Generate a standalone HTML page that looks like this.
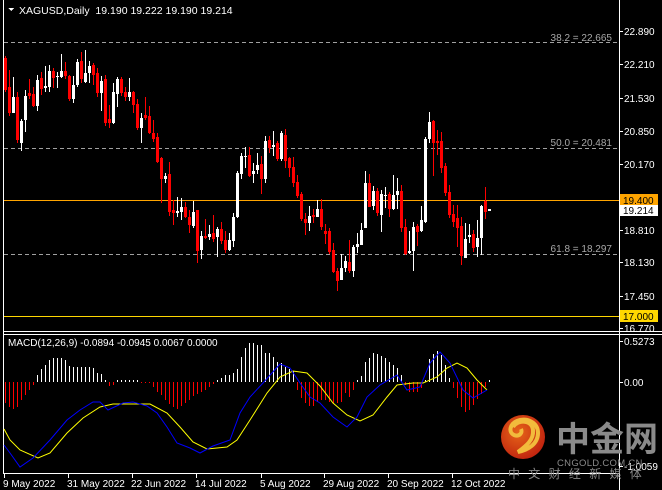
<!DOCTYPE html>
<html><head><meta charset="utf-8">
<style>
html,body{margin:0;padding:0;background:#000;width:662px;height:490px;overflow:hidden}
svg{display:block}
text{font-family:"Liberation Sans","Noto Sans CJK SC",sans-serif;font-size:10px;fill:#fff}
</style></head><body>
<svg id="s" width="662" height="490" xmlns="http://www.w3.org/2000/svg" shape-rendering="crispEdges">
<rect width="662" height="490" fill="#000"/>
<!-- frame -->
<rect x="3" y="0" width="1" height="474" fill="#fff"/>
<rect x="619" y="0" width="1" height="490" fill="#fff"/>
<rect x="3" y="331" width="659" height="1" fill="#fff"/>
<rect x="3" y="334" width="659" height="1" fill="#fff"/>
<rect x="3" y="473" width="616" height="1" fill="#fff"/>
<!-- fib dashed lines -->
<g stroke="#a0a0a0" stroke-width="1" stroke-dasharray="4,3">
<line x1="4" y1="42.5" x2="619" y2="42.5"/>
<line x1="4" y1="148.5" x2="619" y2="148.5"/>
<line x1="4" y1="254.5" x2="619" y2="254.5"/>
</g>
<g style="font-size:10px">
<text x="612" y="41" text-anchor="end" style="fill:#a8a8a8">38.2 = 22.665</text>
<text x="612" y="146" text-anchor="end" style="fill:#a8a8a8">50.0 = 20.481</text>
<text x="612" y="252" text-anchor="end" style="fill:#a8a8a8">61.8 = 18.297</text>
</g>
<rect x="4" y="200" width="615" height="1" fill="#ffa500"/>
<rect x="4" y="316" width="615" height="1" fill="#ffd700"/>
<g id="c"></g>
<g id="h"></g>
<polyline id="yl" fill="none" stroke="#ffff00" stroke-width="1" shape-rendering="auto"/>
<polyline id="bl" fill="none" stroke="#0000ff" stroke-width="1" shape-rendering="auto"/>
<!-- zero line dotted hint not needed -->
<!-- header -->
<path d="M8 8 L14 8 L11 11 Z" fill="#fff"/>
<text x="19" y="14" style="font-size:10.5px">XAGUSD,Daily&#160; 19.190 19.222 19.190 19.214</text>
<text x="8" y="346" style="font-size:10px">MACD(12,26,9) -0.0894 -0.0945 0.0067 0.0000</text>
<!-- right axis -->
<g id="ax"></g>
<rect x="620" y="194" width="38" height="12" fill="#ffa500"/>
<text x="623" y="204" style="fill:#000">19.400</text>
<rect x="620" y="205" width="38" height="11" fill="#fff"/>
<text x="623" y="214" style="fill:#000">19.214</text>
<rect x="620" y="310" width="38" height="12" fill="#ffd700"/>
<text x="623" y="320" style="fill:#000">17.000</text>
<!-- dates -->
<g id="dt"></g>
<!-- watermark -->
<defs><radialGradient id="g1" cx="0.4" cy="0.4" r="0.7"><stop offset="0" stop-color="#f26a1b"/><stop offset="1" stop-color="#c8200f"/></radialGradient></defs>
<g shape-rendering="auto" opacity="0.95">
<circle cx="523" cy="437" r="22" fill="url(#g1)"/>
<path d="M513 427 C518 419 532 420 533 430 C534 440 526 446 518 452 C528 450 538 444 538 433 C538 422 526 417 517 421 C510 424 508 432 514 435 C519 437 523 433 521 429" fill="none" stroke="#ffc640" stroke-width="4"/>
</g>
<text x="556" y="451" style="font-size:34px;font-weight:bold;fill:#8a8a8a;font-family:'Noto Sans CJK SC','WenQuanYi Zen Hei',sans-serif">中金网</text>
<text x="557" y="466" style="font-size:9.5px;fill:#8a8a8a;letter-spacing:0.3px">CNGOLD.COM.CN</text>
<text x="508" y="478" style="font-size:12px;fill:#8a8a8a;letter-spacing:8.3px;font-family:'Noto Sans CJK SC','WenQuanYi Zen Hei',sans-serif">中文财经新媒体</text>
</svg>
<script>
var NS="http://www.w3.org/2000/svg";
function el(p,t,a){var e=document.createElementNS(NS,t);for(var k in a)e.setAttribute(k,a[k]);p.appendChild(e);return e;}
// [color(1=white,0=red), bodyTop, bodyBot, wickTop, wickBot]
var C=[[0,58,90,56,92],[0,87,113,70,116],[1,97,113,77,113],[0,97,140,92,143],[1,121,143,119,151],[1,96,120,90,132],[0,93,96,79,99],[0,94,106,87,107],[1,80,106,75,111],[0,78,89,72,95],
[1,86,88,66,92],[1,71,87,65,92],[0,71,78,68,88],[1,76,77,72,88],[1,71,77,54,78],[0,71,76,62,79],[0,76,99,75,101],[1,85,99,76,103],[1,62,85,59,87],[0,61,79,52,83],
[1,73,82,50,83],[1,66,73,61,83],[0,65,75,63,85],[0,73,93,68,97],[1,81,93,76,111],[0,79,123,75,126],[0,119,123,105,128],[1,92,123,83,124],[1,79,94,77,107],[0,79,93,77,96],
[0,92,97,87,101],[1,92,97,78,101],[0,92,105,91,113],[0,104,128,99,130],[1,118,128,113,143],[0,115,118,97,120],[0,116,133,106,134],[0,133,139,120,142],[0,137,162,133,163],[0,158,179,157,203],
[1,176,179,173,183],[0,174,212,162,216],[0,210,213,200,225],[1,211,213,197,217],[1,207,212,198,220],[0,207,217,202,218],[0,217,225,210,233],[1,212,226,201,228],[0,210,251,210,263],[1,236,250,231,259],
[0,236,238,219,239],[1,234,237,225,240],[0,233,239,215,242],[1,229,237,227,257],[0,229,241,222,244],[0,240,250,231,253],[1,240,250,233,251],[1,217,241,213,247],[1,173,217,171,218],[1,156,174,153,179],
[1,156,157,147,168],[0,155,176,147,177],[1,171,174,163,183],[1,165,170,153,174],[0,164,179,156,194],[1,141,179,136,183],[0,140,148,136,153],[1,145,147,131,156],[0,143,159,141,161],[1,133,159,131,161],
[0,135,161,129,168],[0,158,168,157,177],[0,167,183,157,187],[0,182,196,175,198],[0,194,219,192,221],[0,219,223,213,235],[1,216,223,206,231],[0,215,217,209,223],[1,209,217,200,217],[0,209,227,199,230],
[0,231,234,224,244],[0,231,252,228,254],[0,250,272,243,273],[0,271,281,268,291],[1,268,280,254,280],[1,261,268,256,272],[0,262,271,240,273],[1,247,271,245,277],[1,244,247,233,253],[1,230,245,223,245],
[1,183,228,171,228],[0,183,207,174,207],[1,191,206,186,210],[0,191,213,188,216],[1,194,215,190,232],[1,195,196,187,208],[0,194,209,192,217],[1,195,209,175,210],[1,191,195,178,209],[0,191,228,185,232],
[0,227,254,219,255],[1,251,253,231,254],[1,227,251,222,271],[0,226,232,224,246],[1,220,231,206,232],[1,139,222,137,223],[1,122,139,112,143],[0,121,143,120,176],[0,141,143,130,155],[0,141,168,132,173],
[0,166,193,163,196],[0,192,215,185,218],[0,214,222,205,227],[0,218,228,205,247],[0,226,256,217,265],[1,239,258,223,258],[1,235,237,224,243],[0,234,248,230,252],[1,238,247,220,257],[1,206,238,205,255],
[0,201,212,187,219],[1,209,211,209,211]];
var g=document.getElementById("c");
C.forEach(function(d,i){var x=4+4*i,col=d[0]?"#fff":"#ff0000";
el(g,"rect",{x:x+1,y:d[3],width:1,height:Math.max(1,d[4]-d[3]),fill:col});
el(g,"rect",{x:x,y:d[1],width:3,height:Math.max(1,d[2]-d[1]),fill:col});});
var H=[403,407,409,407,400,395,390,385,375,369,365,360,358,358,358,360,366,367,367,367,367,367,368,373,374,381,386,385,381,380,380,380,380,380,383,383,383,387,392,395,400,404,407,409,406,403,400,396,394,392,390,387,384,381,378,375,375,373,369,357,348,343,343,345,345,353,353,357,362,363,367,369,371,
390,398,403,406,406,402,400,400,402,403,403,402,393,397,390,381,376,362,358,353,354,356,358,362,365,368,375,385,392,392,392,388,380,359,354,351,355,365,378,388,398,407,412,410,405,399,394,387,381];
var gh=document.getElementById("h");
H.forEach(function(v,i){var x=5+4*i;
if(v>382){el(gh,"rect",{x:x,y:382,width:1,height:v-382,fill:"#ff0000"});}
else{var t=Math.min(v,380);el(gh,"rect",{x:x,y:t,width:1,height:382-t,fill:"#fff"});}});
document.getElementById("yl").setAttribute("points","4,429 10,440 20,450 38,458 50,453 67,433 83,418 100,407 113,404 150,404 167,413 180,427 193,442 207,449 227,447 237,440 250,420 267,393 280,377 293,371 307,373 320,386 333,403 347,415 360,421 373,415 387,397 397,385 413,383 423,383 437,377 447,368 457,363 467,368 477,380 487,390");
document.getElementById("bl").setAttribute("points","4,445 10,453 20,467 33,458 50,440 67,420 80,410 93,402 100,402 108,410 123,403 133,402 147,406 157,413 167,427 177,443 190,448 200,453 213,446 230,440 240,413 250,397 263,383 280,364 290,368 300,383 310,397 320,403 333,417 347,427 357,417 367,397 380,385 397,375 407,390 420,387 430,363 440,352 450,363 463,390 473,398 487,390");
var ax=document.getElementById("ax");
[["22.890",31],["22.210",64],["21.530",98],["20.850",131],["20.170",164],["18.810",230],["18.130",262],["17.450",296],["16.770",328],["0.5273",341],["0.00",382],["-1.0059",466]].forEach(function(a){
el(ax,"rect",{x:620,y:a[1],width:3,height:1,fill:"#fff"});
var t=el(ax,"text",{x:624,y:a[1]+4});t.textContent=a[0];});
var dt=document.getElementById("dt");
[["9 May 2022",4],["31 May 2022",68],["22 Jun 2022",132],["14 Jul 2022",196],["5 Aug 2022",261],["29 Aug 2022",324],["20 Sep 2022",388],["12 Oct 2022",452]].forEach(function(a){
el(dt,"rect",{x:a[1],y:474,width:1,height:4,fill:"#fff"});
var t=el(dt,"text",{x:a[1]-1,y:487});t.textContent=a[0];});
</script>
</body></html>
